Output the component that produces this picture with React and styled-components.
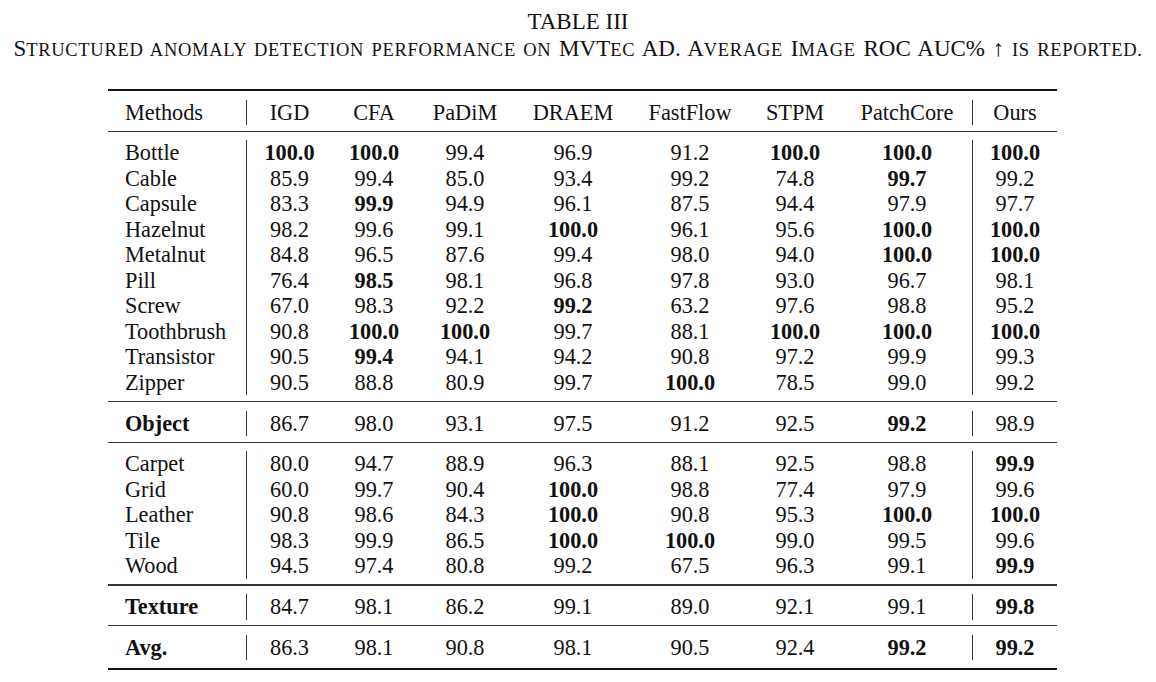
import React from "react"
import styled, { createGlobalStyle } from "styled-components"

const GlobalStyle = createGlobalStyle`
  body {
    margin: 0;
    background: #ffffff;
    color: #111111;
    font-family: "Liberation Serif", "Times New Roman", serif;
  }
`

const COLS = "138px 86px 84px 98px 118px 116px 94px 130px 85px"

const Page = styled.div`
  width: 1156px;
  height: 682px;
  padding-top: 8px;
  box-sizing: border-box;
`

const Title = styled.div`
  text-align: center;
  font-size: 23px;
  line-height: 27px;
`

const Caption = styled.div`
  text-align: center;
  font-size: 23px;
  line-height: 27px;
  margin-bottom: 25px;
  white-space: nowrap;
  word-spacing: 2px;
`

// fake small caps the LaTeX way: upper-case letters set smaller
const Sc = styled.span`
  font-size: 18.5px;
  letter-spacing: 0.7px;
  text-transform: uppercase;
`

const Table = styled.div`
  width: 949px;
  margin-left: 108px;
  font-size: 22.3px;
`

const Rule = styled.div`
  height: ${(p) => (p.$heavy ? "2px" : "1.3px")};
  background: ${(p) => (p.$heavy ? "#111" : "#333")};
  margin-top: ${(p) => (p.$first ? "0" : p.$last ? "8px" : "5.5px")};
  margin-bottom: ${(p) => (p.$last ? "0" : "8.5px")};
`

const Section = styled.div`
  display: grid;
  grid-template-columns: ${COLS};
`

const Cell = styled.div`
  height: 25.5px;
  line-height: 25.5px;
  text-align: ${(p) => (p.$left ? "left" : "center")};
  padding-left: ${(p) => (p.$left ? "17px" : "0")};
  font-weight: ${(p) => (p.$bold ? "bold" : "normal")};
  border-left: ${(p) => (p.$bar ? "1.3px solid #333" : "none")};
  white-space: nowrap;
`

const methods = ["IGD", "CFA", "PaDiM", "DRAEM", "FastFlow", "STPM", "PatchCore", "Ours"]

const objects = [
  ["Bottle", "100.0*", "100.0*", "99.4", "96.9", "91.2", "100.0*", "100.0*", "100.0*"],
  ["Cable", "85.9", "99.4", "85.0", "93.4", "99.2", "74.8", "99.7*", "99.2"],
  ["Capsule", "83.3", "99.9*", "94.9", "96.1", "87.5", "94.4", "97.9", "97.7"],
  ["Hazelnut", "98.2", "99.6", "99.1", "100.0*", "96.1", "95.6", "100.0*", "100.0*"],
  ["Metalnut", "84.8", "96.5", "87.6", "99.4", "98.0", "94.0", "100.0*", "100.0*"],
  ["Pill", "76.4", "98.5*", "98.1", "96.8", "97.8", "93.0", "96.7", "98.1"],
  ["Screw", "67.0", "98.3", "92.2", "99.2*", "63.2", "97.6", "98.8", "95.2"],
  ["Toothbrush", "90.8", "100.0*", "100.0*", "99.7", "88.1", "100.0*", "100.0*", "100.0*"],
  ["Transistor", "90.5", "99.4*", "94.1", "94.2", "90.8", "97.2", "99.9", "99.3"],
  ["Zipper", "90.5", "88.8", "80.9", "99.7", "100.0*", "78.5", "99.0", "99.2"],
]

const textures = [
  ["Carpet", "80.0", "94.7", "88.9", "96.3", "88.1", "92.5", "98.8", "99.9*"],
  ["Grid", "60.0", "99.7", "90.4", "100.0*", "98.8", "77.4", "97.9", "99.6"],
  ["Leather", "90.8", "98.6", "84.3", "100.0*", "90.8", "95.3", "100.0*", "100.0*"],
  ["Tile", "98.3", "99.9", "86.5", "100.0*", "100.0*", "99.0", "99.5", "99.6"],
  ["Wood", "94.5", "97.4", "80.8", "99.2", "67.5", "96.3", "99.1", "99.9*"],
]

const objectAvg = ["Object*", "86.7", "98.0", "93.1", "97.5", "91.2", "92.5", "99.2*", "98.9"]
const textureAvg = ["Texture*", "84.7", "98.1", "86.2", "99.1", "89.0", "92.1", "99.1", "99.8*"]
const overall = ["Avg.*", "86.3", "98.1", "90.8", "98.1", "90.5", "92.4", "99.2*", "99.2*"]

// bars sit left of IGD and left of Ours
const Row = ({ cells }) =>
  cells.map((v, i) => {
    const bold = v.endsWith("*")
    const text = bold ? v.slice(0, -1) : v
    return (
      <Cell key={i} $left={i === 0} $bold={bold} $bar={i === 1 || i === 8}>
        {text}
      </Cell>
    )
  })

export default function App() {
  return (
    <Page>
      <GlobalStyle />
      <Title>TABLE III</Title>
      <Caption>
        S<Sc>tructured anomaly detection performance on</Sc> MVT<Sc>ec</Sc> AD. A<Sc>verage</Sc> I
        <Sc>mage</Sc> ROC AUC% ↑ <Sc>is reported.</Sc>
      </Caption>

      <Table>
        <Rule $heavy $first />
        <Section>
          <Row cells={["Methods", ...methods]} />
        </Section>
        <Rule />
        <Section>
          {objects.map((r) => (
            <Row key={r[0]} cells={r} />
          ))}
        </Section>
        <Rule />
        <Section>
          <Row cells={objectAvg} />
        </Section>
        <Rule />
        <Section>
          {textures.map((r) => (
            <Row key={r[0]} cells={r} />
          ))}
        </Section>
        <Rule />
        <Section>
          <Row cells={textureAvg} />
        </Section>
        <Rule />
        <Section>
          <Row cells={overall} />
        </Section>
        <Rule $heavy $last />
      </Table>
    </Page>
  )
}
